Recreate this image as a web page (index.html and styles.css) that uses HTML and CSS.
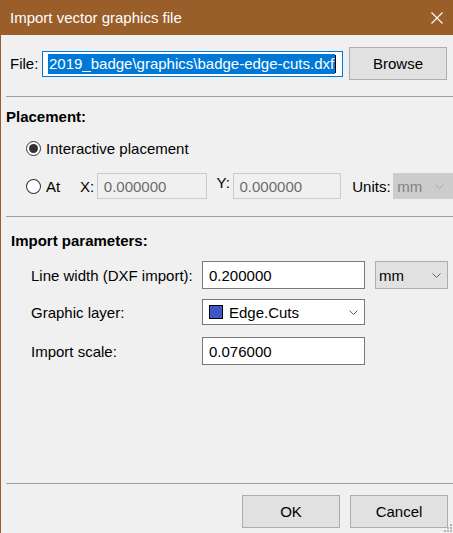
FILE: index.html
```html
<!DOCTYPE html>
<html>
<head>
<meta charset="utf-8">
<link rel="stylesheet" href="styles.css">
</head>
<body>
<div class="window">
  <div class="titlebar">
    <span class="title">Import vector graphics file</span>
    <svg class="close" width="12" height="12" viewBox="0 0 12 12"><path d="M0.5 0.5L11.5 11.5M11.5 0.5L0.5 11.5" stroke="#ffffff" stroke-width="1.1" fill="none"/></svg>
  </div>

  <div class="file-row">
    <span class="file-label">File:</span>
    <div class="file-input"><span class="sel">2019_badge\graphics\badge-edge-cuts.dxf</span><span class="caret"></span></div>
    <div class="btn browse">Browse</div>
  </div>

  <div class="sep sep1"></div>

  <div class="heading placement-h">Placement:</div>
  <div class="radio-row r1"><span class="radio checked"></span><span>Interactive placement</span></div>
  <div class="radio-row r2">
    <span class="radio"></span><span class="at">At</span>
    <span class="xlabel">X:</span><div class="field disabled xfield">0.000000</div>
    <span class="ylabel">Y:</span><div class="field disabled yfield">0.000000</div>
    <span class="ulabel">Units:</span>
    <div class="combo combo-disabled">mm<svg class="chev" width="9" height="5" viewBox="0 0 9 5"><path d="M0.5 0.5L4.5 4.5L8.5 0.5" stroke="#a8a8a8" fill="none"/></svg></div>
  </div>

  <div class="sep sep2"></div>

  <div class="heading params-h">Import parameters:</div>
  <div class="param-row row-lw">
    <span class="plabel">Line width (DXF import):</span>
    <div class="field text28">0.200000</div>
    <div class="combo combo-units">mm<svg class="chev" width="9" height="5" viewBox="0 0 9 5"><path d="M0.5 0.5L4.5 4.5L8.5 0.5" stroke="#606060" fill="none"/></svg></div>
  </div>
  <div class="param-row row-gl">
    <span class="plabel">Graphic layer:</span>
    <div class="field layer-combo"><span class="swatch"></span><span>Edge.Cuts</span><svg class="chev" width="9" height="5" viewBox="0 0 9 5"><path d="M0.5 0.5L4.5 4.5L8.5 0.5" stroke="#606060" fill="none"/></svg></div>
  </div>
  <div class="param-row row-sc">
    <span class="plabel">Import scale:</span>
    <div class="field text28">0.076000</div>
  </div>

  <div class="spacer"></div>
  <div class="sep sep3"></div>
  <div class="btn-row">
    <div class="btn">OK</div>
    <div class="btn">Cancel</div>
  </div>

  <svg class="grip" width="10" height="10" viewBox="0 0 10 10">
    <rect x="7" y="1" width="2" height="2" fill="#b5b5b5"/>
    <rect x="4" y="4" width="2" height="2" fill="#b5b5b5"/>
    <rect x="7" y="4" width="2" height="2" fill="#b5b5b5"/>
    <rect x="1" y="7" width="2" height="2" fill="#b5b5b5"/>
    <rect x="4" y="7" width="2" height="2" fill="#b5b5b5"/>
    <rect x="7" y="7" width="2" height="2" fill="#b5b5b5"/>
  </svg>
</div>
</body>
</html>
```
FILE: styles.css
```css
* { box-sizing: border-box; }
html, body { margin: 0; padding: 0; background: #f0f0f0; overflow: hidden; }
body {
  font-family: "Liberation Sans", Arial, sans-serif;
  font-size: 15px;
  color: #000;
}
.window {
  position: relative;
  width: 453px;
  height: 533px;
  background: #f0f0f0;
  border-left: 1px solid #9a5e2b;
  display: flex;
  flex-direction: column;
}
.titlebar {
  height: 35px;
  margin-left: -1px;
  background: #9a5e2b;
  display: flex;
  align-items: center;
  padding-left: 10px;
  color: #fff;
  flex: none;
}
.title { line-height: 20px; }
.close { margin-left: auto; margin-right: 10px; }

.file-row {
  display: flex;
  align-items: flex-start;
  height: 33px;
  margin-top: 12px;
  flex: none;
}
.file-label {
  width: 32px;
  margin-left: 9px;
  line-height: 33px;
}
.file-input {
  margin-top: 4px;
  width: 301px;
  height: 26px;
  border: 1px solid #0078d7;
  background: #fff;
  display: flex;
  align-items: center;
  padding-left: 5px;
  overflow: hidden;
  white-space: nowrap;
}
.sel {
  background: #0078d7;
  color: #fff;
  line-height: 20px;
  padding: 0 1px;
}
.caret {
  width: 1px;
  height: 18px;
  background: #000;
}
.btn {
  width: 98px;
  height: 33px;
  background: #e1e1e1;
  border: 1px solid #adadad;
  display: flex;
  align-items: center;
  justify-content: center;
}
.browse { margin-left: 6px; }

.sep {
  height: 1px;
  background: #a0a0a0;
  margin-left: 5px;
  flex: none;
}
.sep1 { margin-top: 16px; }
.sep2 { margin-top: 17px; }

.heading {
  font-weight: bold;
  line-height: 20px;
  flex: none;
}
.placement-h { margin-top: 10px; padding-left: 5px; }
.params-h { margin-top: 14px; padding-left: 10px; }

.radio-row {
  display: flex;
  align-items: center;
  padding-left: 25px;
  flex: none;
}
.r1 { height: 24px; margin-top: 9px; }
.r2 { height: 26px; margin-top: 13px; }
.radio {
  width: 15px;
  height: 15px;
  border: 1px solid #333;
  border-radius: 50%;
  background: #fff;
  margin-right: 5px;
  display: flex;
  align-items: center;
  justify-content: center;
}
.radio.checked::after {
  content: "";
  width: 9px;
  height: 9px;
  border-radius: 50%;
  background: #333;
}
.at { width: 34px; }
.xlabel { width: 17px; }
.ylabel { width: 16px; margin-left: 10px; align-self: flex-start; line-height: 20px; }
.ulabel { width: 41px; margin-left: 11px; }

.field {
  height: 26px;
  border: 1px solid #7a7a7a;
  background: #fff;
  display: flex;
  align-items: center;
  padding-left: 6px;
  white-space: nowrap;
}
.field.disabled {
  border-color: #cccccc;
  background: #f0f0f0;
  color: #6d6d6d;
}
.xfield { width: 110px; }
.yfield { width: 109px; }

.combo {
  height: 26px;
  display: flex;
  align-items: center;
  padding-left: 3px;
  white-space: nowrap;
}
.combo .chev { margin-left: auto; }
.combo-disabled {
  width: 60px;
  background: #cccccc;
  border: 1px solid #cccccc;
  color: #838383;
}
.combo-disabled .chev { margin-right: 8px; }

.param-row {
  display: flex;
  align-items: center;
  padding-left: 30px;
  flex: none;
}
.plabel { width: 171px; }
.row-lw { height: 28px; margin-top: 10px; }
.row-gl { height: 26px; margin-top: 10px; }
.row-sc { height: 28px; margin-top: 12px; }
.text28 { width: 163px; height: 28px; }
.combo-units {
  width: 73px;
  height: 28px;
  margin-left: 10px;
  background: #e1e1e1;
  border: 1px solid #adadad;
}
.combo-units .chev { margin-right: 6px; }
.layer-combo { width: 163px; }
.layer-combo .chev { margin-left: auto; margin-right: 6px; }
.swatch {
  width: 14px;
  height: 14px;
  background: #3f57c4;
  border: 1px solid #000;
  margin-right: 6px;
}

.spacer { flex: 1; }
.sep3 { flex: none; }
.btn-row {
  display: flex;
  justify-content: flex-end;
  gap: 10px;
  margin-top: 11px;
  margin-bottom: 5px;
  padding-right: 5px;
  flex: none;
}
.grip {
  position: absolute;
  right: 0;
  bottom: 0;
}
```
